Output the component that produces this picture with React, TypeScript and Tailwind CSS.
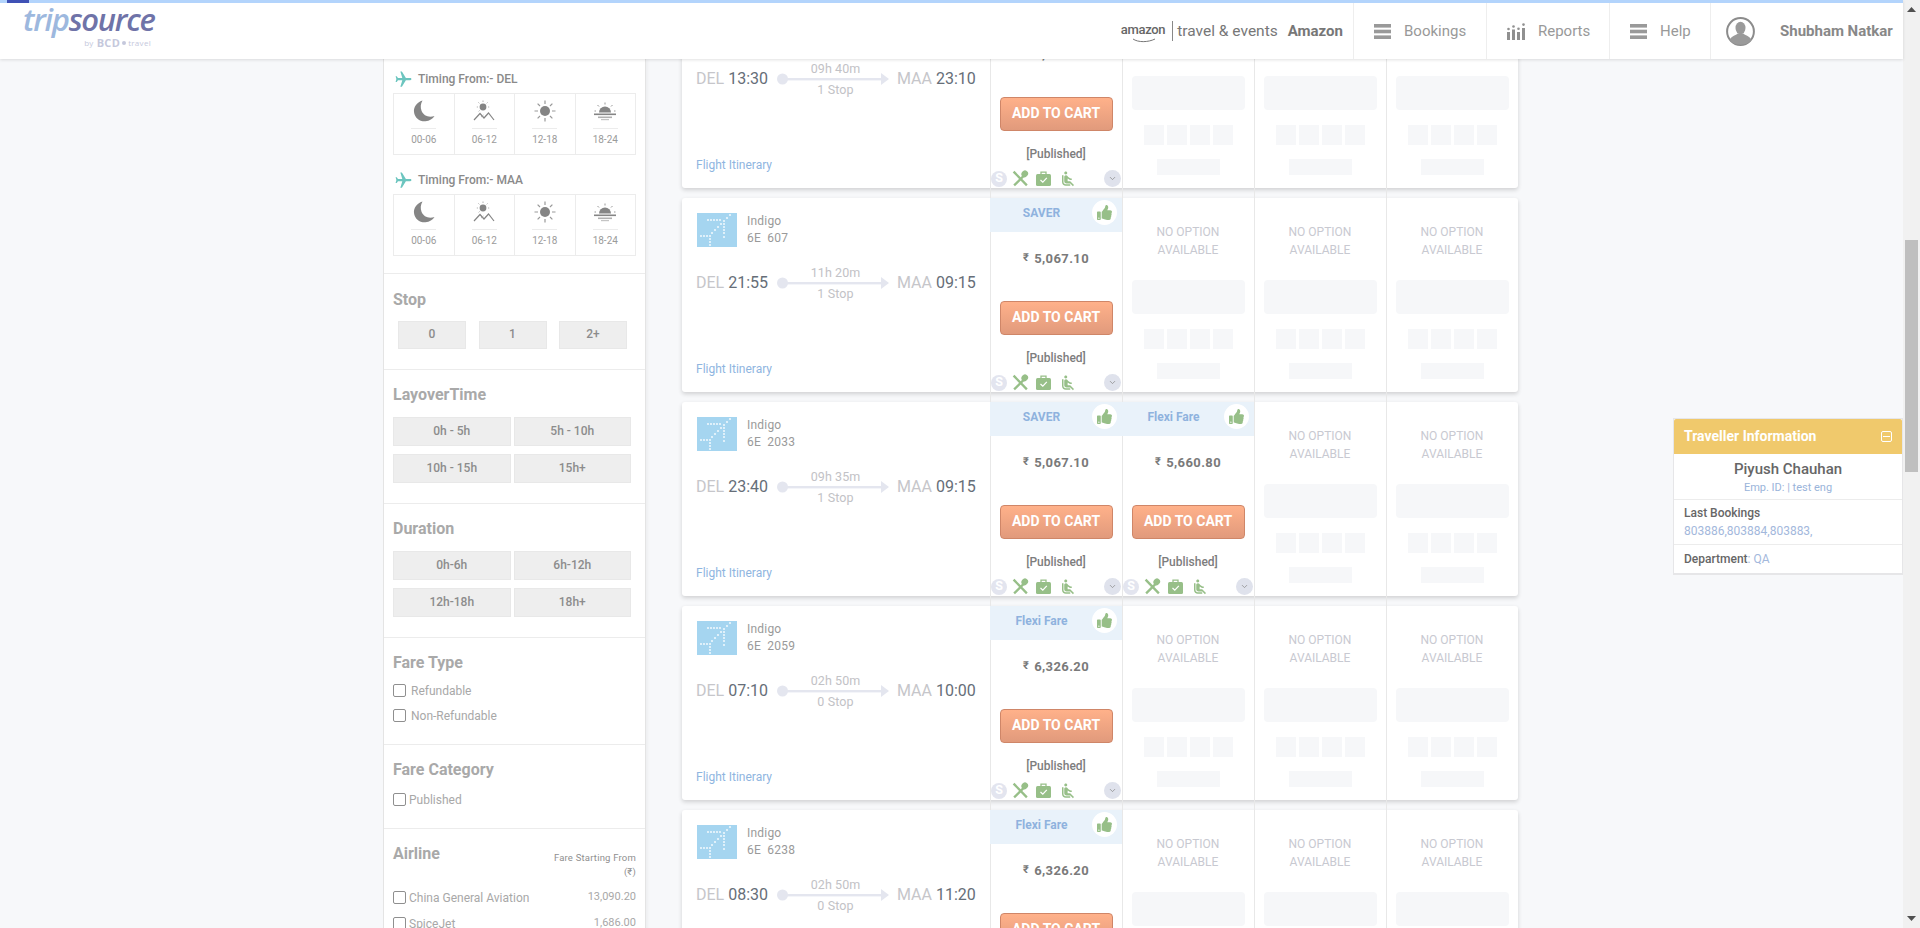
import { FaThumbsUp } from 'react-icons/fa';
import { MdAirlineSeatReclineNormal, MdFlight } from 'react-icons/md';
import { FiChevronDown } from 'react-icons/fi';

interface Fare {
  label: string;
  price: string;
}

interface Flight {
  code: string;
  dep: string;
  arr: string;
  duration: string;
  stops: string;
  fares: Fare[];
}

const flights: Flight[] = [
  { code: '', dep: '13:30', arr: '23:10', duration: '09h 40m', stops: '1 Stop', fares: [{ label: 'SAVER', price: '5,067.10' }] },
  { code: '607', dep: '21:55', arr: '09:15', duration: '11h 20m', stops: '1 Stop', fares: [{ label: 'SAVER', price: '5,067.10' }] },
  {
    code: '2033',
    dep: '23:40',
    arr: '09:15',
    duration: '09h 35m',
    stops: '1 Stop',
    fares: [
      { label: 'SAVER', price: '5,067.10' },
      { label: 'Flexi Fare', price: '5,660.80' },
    ],
  },
  { code: '2059', dep: '07:10', arr: '10:00', duration: '02h 50m', stops: '0 Stop', fares: [{ label: 'Flexi Fare', price: '6,326.20' }] },
  { code: '6238', dep: '08:30', arr: '11:20', duration: '02h 50m', stops: '0 Stop', fares: [{ label: 'Flexi Fare', price: '6,326.20' }] },
];

const IndigoLogo = () => {
  const dots = [
    [11, 7], [14, 7], [17, 7], [20, 7], [23, 7],
    [33, 2], [30, 5], [27, 8], [24, 11], [21, 14], [18, 17], [15, 20],
    [27, 11], [27, 14], [27, 17], [27, 20], [27, 24],
    [4, 23], [7, 23], [10, 23], [13, 23],
    [13, 26], [13, 29], [13, 32],
  ];
  return (
    <svg width="40" height="34" viewBox="0 0 40 34" className="shrink-0">
      <rect width="40" height="34" fill="#a5d5f0" />
      {dots.map(([x, y]) => (
        <circle key={`${x}-${y}`} cx={x} cy={y} r="1.1" fill="#ffffff" fillOpacity="0.8" />
      ))}
    </svg>
  );
};

const MenuIcon = () => (
  <svg width="17" height="15" viewBox="0 0 17 15" className="shrink-0">
    <rect y="0" width="17" height="3.6" fill="#999999" />
    <rect y="5.7" width="17" height="3.6" fill="#999999" />
    <rect y="11.4" width="17" height="3.6" fill="#999999" />
  </svg>
);

const ReportsIcon = () => (
  <svg width="19" height="17" viewBox="0 0 19 17" className="shrink-0">
    <g fill="#909090">
      <rect x="0" y="9" width="3" height="8" />
      <rect x="5" y="6.5" width="3" height="10.5" />
      <rect x="10" y="9" width="3" height="8" />
      <rect x="15" y="5" width="3" height="12" />
      <circle cx="1.5" cy="6" r="1.3" />
      <circle cx="6.5" cy="3.5" r="1.3" />
      <circle cx="11.5" cy="5.8" r="1.3" />
      <circle cx="16.5" cy="1.6" r="1.3" />
    </g>
  </svg>
);

const Avatar = () => (
  <svg width="29" height="29" viewBox="0 0 29 29" className="shrink-0">
    <circle cx="14.5" cy="14.5" r="13.4" fill="#ffffff" stroke="#8c8c8c" strokeWidth="2" />
    <ellipse cx="14.5" cy="11" rx="5" ry="6.2" fill="#9a9a9a" />
    <path d="M3.5 23 C6 18.5 10 18.5 11.5 16.5 L17.5 16.5 C19 18.5 23 18.5 25.5 23 C22.5 26.5 18.5 27.7 14.5 27.7 C10.5 27.7 6.5 26.5 3.5 23Z" fill="#9a9a9a" />
  </svg>
);

const Moon = () => (
  <svg width="22" height="22" viewBox="0 0 22 22">
    <path d="M9.5 0.5 C3.5 2.5 0.5 7 1 12 C1.6 18 7 21.8 12.5 21.3 C16.5 21 19.8 18.8 21.5 16 C15.5 18 10.5 15.5 8.6 11 C7.2 7.5 7.6 3.5 9.5 0.5Z" fill="#858585" />
  </svg>
);

const SunMountain = () => (
  <svg width="22" height="22" viewBox="0 0 22 22" fill="none">
    <circle cx="10" cy="7" r="3.4" fill="#858585" />
    <g stroke="#aaaaaa" strokeWidth="0.9">
      <path d="M10 0.5V2M3.8 7H5M15 7H16.2M5.4 2.4L6.4 3.4M14.6 2.4L13.6 3.4M5.6 11.4L6.6 10.4" />
    </g>
    <path d="M1 20L7 13.5L11 18L15.5 13L21 20" stroke="#858585" strokeWidth="1.2" />
    <path d="M8 17L10.5 15" stroke="#aaaaaa" strokeWidth="0.9" />
  </svg>
);

const Sun = () => (
  <svg width="22" height="22" viewBox="0 0 22 22" fill="none">
    <circle cx="11" cy="11" r="5" fill="#858585" />
    <path d="M11 0.5V4M11 18V21.5M0.5 11H4M18 11H21.5M3.6 3.6L6 6M16 16L18.4 18.4M18.4 3.6L16 6M6 16L3.6 18.4" stroke="#999999" strokeWidth="1.2" />
  </svg>
);

const Sunset = () => (
  <svg width="22" height="22" viewBox="0 0 22 22" fill="none">
    <path d="M5 12.5 A6 6 0 0 1 17 12.5Z" fill="#858585" />
    <rect x="0" y="13.5" width="22" height="1.6" fill="#858585" />
    <rect x="4" y="16.5" width="14" height="1.6" fill="#b0b0b0" />
    <rect x="7" y="19" width="8" height="1.2" fill="#c4c4c4" />
    <path d="M11 2.5V4.5M3.5 5L5 6.5M18.5 5L17 6.5M0.5 11H2M20 11H21.5" stroke="#999999" strokeWidth="1" />
  </svg>
);

const timeSlots = [
  { label: '00-06', icon: <Moon /> },
  { label: '06-12', icon: <SunMountain /> },
  { label: '12-18', icon: <Sun /> },
  { label: '18-24', icon: <Sunset /> },
];

const TimingBlock = ({ city, className }: { city: string; className?: string }) => (
  <div className={className}>
    <div className="flex h-[14px] items-center">
      <MdFlight className="ml-[1px] mr-[5px] h-[19px] w-[19px] rotate-90 text-[#6cc5bf]" />
      <span className="text-[12px] font-medium leading-[14px] text-[#8a8a8a]">Timing From:- {city}</span>
    </div>
    <div className="mt-[7px] flex h-[62px] border border-[#ececec]">
      {timeSlots.map((slot) => (
        <div key={slot.label} className="flex flex-1 flex-col items-center border-r border-[#ececec] pt-[6px] last:border-r-0">
          <div className="flex h-[22px] items-center justify-center">{slot.icon}</div>
          <div className="mt-[6px] h-px w-[25px] bg-[#ececec]" />
          <span className="mt-[5px] text-[10px] leading-[12px] text-[#9b9b9b]">{slot.label}</span>
        </div>
      ))}
    </div>
  </div>
);

const FilterTitle = ({ children }: { children: string }) => (
  <h3 className="h-[18px] pt-px text-[16px] font-bold leading-[18px] text-[#a9a9a9]">{children}</h3>
);

const FilterButtons = ({ items }: { items: string[] }) => (
  <div className="mt-[14px] grid w-[238px] grid-cols-2 gap-x-[3px] gap-y-[8px]">
    {items.map((item) => (
      <button key={item} className="h-[29px] border border-[#e8e8e8] bg-[#eeeeee] pb-[2px] text-[12px] font-medium text-[#8c8c8c]">
        {item}
      </button>
    ))}
  </div>
);

const Check = ({ label, className }: { label: string; className?: string }) => (
  <label className={`flex h-[16px] items-center ${className ?? ''}`}>
    <span className="h-[13px] w-[13px] shrink-0 rounded-[2px] border border-[#8f8f8f] bg-white" />
    <span className="pt-px text-[12px] text-[#a8a8a8]">{label}</span>
  </label>
);

const Sidebar = () => (
  <aside className="h-[900px] w-[263px] shrink-0 border-x border-[#e4e4e4] bg-white shadow-[2px_0_3px_rgba(0,0,0,0.04)]">
    <section className="border-b border-[#ececec] px-[9px] pb-[17px] pt-[13px]">
      <TimingBlock city="DEL" />
      <TimingBlock city="MAA" className="mt-[18px]" />
    </section>

    <section className="border-b border-[#ececec] px-[9px] pb-[20px] pt-[16px]">
      <FilterTitle>Stop</FilterTitle>
      <div className="ml-[5px] mt-[13px] flex w-[229px] justify-between">
        {['0', '1', '2+'].map((s) => (
          <button key={s} className="h-[28px] w-[68px] border border-[#e8e8e8] bg-[#eeeeee] pb-[2px] text-[12px] font-medium text-[#8c8c8c]">
            {s}
          </button>
        ))}
      </div>
    </section>

    <section className="border-b border-[#ececec] px-[9px] pb-[20px] pt-[15px]">
      <FilterTitle>LayoverTime</FilterTitle>
      <FilterButtons items={['0h - 5h', '5h - 10h', '10h - 15h', '15h+']} />
    </section>

    <section className="border-b border-[#ececec] px-[9px] pb-[20px] pt-[15px]">
      <FilterTitle>Duration</FilterTitle>
      <FilterButtons items={['0h-6h', '6h-12h', '12h-18h', '18h+']} />
    </section>

    <section className="border-b border-[#ececec] px-[9px] pb-[21px] pt-[15px]">
      <FilterTitle>Fare Type</FilterTitle>
      <Check label="Refundable" className="mt-[11px] [&>span:last-child]:ml-[5px]" />
      <Check label="Non-Refundable" className="mt-[9px] [&>span:last-child]:ml-[5px]" />
    </section>

    <section className="border-b border-[#ececec] px-[9px] pb-[21px] pt-[15px]">
      <FilterTitle>Fare Category</FilterTitle>
      <Check label="Published" className="mt-[13px] [&>span:last-child]:ml-[3px]" />
    </section>

    <section className="px-[9px] pt-[15px]">
      <div className="flex items-start justify-between">
        <FilterTitle>Airline</FilterTitle>
        <p className="mt-[7px] w-[90px] text-right text-[9.5px] leading-[14px] tracking-[0.2px] text-[#8f8f8f]">Fare Starting From (₹)</p>
      </div>
      <div className="mt-[10px] flex h-[16px] items-center justify-between">
        <Check label="China General Aviation" className="[&>span:last-child]:ml-[3px]" />
        <span className="pt-px text-[11px] text-[#a8a8a8]">13,090.20</span>
      </div>
      <div className="mt-[10px] flex h-[16px] items-center justify-between">
        <Check label="SpiceJet" className="[&>span:last-child]:ml-[3px]" />
        <span className="pt-px text-[11px] text-[#a8a8a8]">1,686.00</span>
      </div>
    </section>
  </aside>
);

const FareIcons = () => (
  <div className="mt-[8px] flex h-[17px] w-full items-center pl-px pr-px">
    <span className="flex h-[16px] w-[16px] shrink-0 items-center justify-center rounded-full bg-[#e3e5ef] text-[12.5px] font-bold leading-none text-white">S</span>
    <svg width="17" height="17" viewBox="0 0 16 16" fill="none" className="ml-[5px] shrink-0">
      <path d="M1.5 1.5L14 14.5" stroke="#97bf88" strokeWidth="2.2" />
      <path d="M11 5.5L2 14.5" stroke="#97bf88" strokeWidth="2.2" />
      <ellipse cx="12" cy="3.6" rx="3" ry="3.3" transform="rotate(40 12 3.6)" fill="#97bf88" />
    </svg>
    <svg width="15" height="15" viewBox="0 0 15 15" fill="none" className="ml-[7px] shrink-0">
      <path d="M5 3V1.2H10V3" stroke="#97bf88" strokeWidth="1.3" />
      <rect x="0" y="3" width="15" height="12" rx="1.5" fill="#97bf88" />
      <path d="M4.5 9L6.8 11.2L10.8 6.8" stroke="#ffffff" strokeWidth="1.2" />
    </svg>
    <MdAirlineSeatReclineNormal className="ml-[8px] h-[18px] w-[18px] shrink-0 text-[#97bf88]" />
    <span className="ml-auto flex h-[17px] w-[17px] shrink-0 items-center justify-center rounded-full bg-[#dfe2ec] text-[#8a8a8a]">
      <FiChevronDown className="h-[9px] w-[9px]" />
    </span>
  </div>
);

const cellLine = "relative w-[132px] shrink-0 before:absolute before:bottom-0 before:left-0 before:top-[-10px] before:w-px before:bg-[#e8e8e8] before:content-['']";

const FareCell = ({ fare }: { fare: Fare }) => (
  <div className={`${cellLine} flex flex-col items-center`}>
    <div className="relative flex h-[34px] w-full shrink-0 items-center justify-center bg-[#e9f2fa] pb-[5px] pr-[29px]">
      <span className="text-[12px] font-bold text-[#8fb2de]">{fare.label}</span>
      <span className="absolute right-[5px] top-[2px] flex h-[25px] w-[25px] items-center justify-center rounded-full bg-white">
        <FaThumbsUp className="h-[15px] w-[15px] text-[#97bf88]" />
      </span>
    </div>
    <p className="mt-[18px] text-[13px] font-bold leading-[16px] tracking-[0.4px] text-[#7a7a7a]">
      <span className="mr-[5px] align-[2px] text-[11px]">₹</span>
      {fare.price}
    </p>
    <button className="mt-[34px] h-[34px] w-[113px] shrink-0 rounded-[4px] border border-[#cf8668] bg-gradient-to-b from-[#ffb18a] to-[#e19a7c] pb-[2px] text-[14px] font-bold text-white">
      ADD TO CART
    </button>
    <p className="mt-[15px] text-[12px] font-medium leading-[16px] text-[#7d7d7d]">[Published]</p>
    <FareIcons />
  </div>
);

const EmptyCell = () => (
  <div className={`${cellLine} flex flex-col items-center pt-[25px]`}>
    <p className="w-[90px] text-center text-[12px] leading-[18px] text-[#c8c9d1]">NO OPTION AVAILABLE</p>
    <div className="mt-[21px] h-[34px] w-[113px] rounded-[4px] bg-[#f6f7f9]" />
    <div className="mt-[15px] flex gap-[3px]">
      {[0, 1, 2, 3].map((i) => (
        <div key={i} className="h-[20px] w-[20px] bg-[#f6f7f9]" />
      ))}
    </div>
    <div className="mt-[14px] h-[16px] w-[63px] bg-[#f6f7f9]" />
  </div>
);

const FlightCard = ({ flight }: { flight: Flight }) => (
  <div className="flex h-[194px] w-[836px] shrink-0 rounded-[3px] bg-white shadow-[0_2px_4px_rgba(0,0,0,0.16)]">
    <div className="flex w-[308px] shrink-0 flex-col pl-[15px] pt-[15px]">
      <div className="flex gap-[10px]">
        <IndigoLogo />
        <div className="text-[12px] leading-[17px] tracking-[0.2px] text-[#9a9a9a]">
          <div>Indigo</div>
          <div className="whitespace-pre">6E  {flight.code}</div>
        </div>
      </div>
      <div className="ml-[-1px] mt-[16px] flex h-[40px] items-center text-[16px]">
        <div className="w-[81px] shrink-0">
          <span className="text-[#c6c6ca]">DEL</span> <span className="text-[#666e78]">{flight.dep}</span>
        </div>
        <div className="relative flex h-[40px] w-[120px] shrink-0 flex-col items-center justify-between pt-[1px] text-[12.5px] leading-[18px] tracking-[0.1px] text-[#c2c2c6]">
          <svg width="112" height="12" viewBox="0 0 112 12" className="absolute left-0 top-[14px]">
            <circle cx="5.5" cy="6" r="5.5" fill="#e4e6ef" />
            <rect x="8" y="5" width="98" height="2.4" fill="#e4e6ef" />
            <path d="M104 0L112 6L104 12Z" fill="#e4e6ef" />
          </svg>
          <span className="pr-[3px]">{flight.duration}</span>
          <span className="pr-[3px]">{flight.stops}</span>
        </div>
        <div className="shrink-0">
          <span className="text-[#c6c6ca]">MAA</span> <span className="text-[#666e78]">{flight.arr}</span>
        </div>
      </div>
      <a className="mb-[15px] ml-[-1px] mt-auto text-[12px] leading-[16px] text-[#8fb5df]">Flight Itinerary</a>
    </div>
    {flight.fares.map((fare) => (
      <FareCell key={fare.label} fare={fare} />
    ))}
    {Array.from({ length: 4 - flight.fares.length }, (_, i) => (
      <EmptyCell key={i} />
    ))}
  </div>
);

const TravellerPanel = () => (
  <aside className="ml-auto mt-[359px] h-[157px] w-[230px] shrink-0 border border-b-2 border-[#e6e6e8] bg-white">
    <div className="flex h-[35px] items-center justify-between rounded-t-[2px] bg-[#f0c96c] pl-[10px] pr-[10px]">
      <span className="text-[14px] font-bold text-white">Traveller Information</span>
      <span className="flex h-[11px] w-[11px] items-center justify-center rounded-[2px] border border-white">
        <span className="h-px w-[7px] bg-white" />
      </span>
    </div>
    <div className="flex h-[46px] flex-col items-center border-b border-[#ececec] pt-[5px]">
      <p className="text-[15px] font-medium leading-[20px] text-[#666666]">Piyush Chauhan</p>
      <p className="pt-px text-[11px] leading-[15px] text-[#9ab4da]">Emp. ID: | test eng</p>
    </div>
    <div className="h-[45px] border-b border-[#ececec] px-[10px] pt-[4px] text-[12px] leading-[18px]">
      <p className="font-medium text-[#666666]">Last Bookings</p>
      <p className="text-[#a3b8dc]">803886,803884,803883,</p>
    </div>
    <p className="px-[10px] pt-[5px] text-[12px] leading-[18px] text-[#a3b8dc]">
      <span className="font-medium text-[#666666]">Department</span>: QA
    </p>
  </aside>
);

const NavItem = ({ icon, label, className }: { icon: React.ReactNode; label: string; className: string }) => (
  <div className={`flex items-center border-l border-[#eeeeee] pl-[20px] ${className}`}>
    {icon}
    <span className="text-[15px] text-[#999999]">{label}</span>
  </div>
);

const Header = () => (
  <header className="relative z-10 shrink-0 bg-white shadow-[0_1px_3px_rgba(0,0,0,0.12)]">
    <div className="flex h-[3px] bg-[#b3d4fc]">
      <div className="ml-[7px] w-[22px] bg-[#3f51b5]" />
    </div>
    <div className="flex h-[56px] items-stretch">
      <div className="ml-[23px] flex w-[131px] flex-col font-['Open_Sans',sans-serif]">
        <div className="mt-[-2px] text-[31px] font-semibold italic leading-[36px] tracking-[-1.3px]">
          <span className="text-[#9db8de]">trip</span>
          <span className="text-[#6f73a8]">source</span>
        </div>
        <div className="mt-[1px] flex items-center justify-end pr-[3px] text-[8px] leading-[10px] tracking-[0.3px] text-[#c5c8dc]">
          <span>by</span>
          <span className="ml-[3px] text-[11px] font-bold">BCD</span>
          <span className="mx-[2px] h-[4px] w-[4px] rounded-full bg-[#c5c8dc]" />
          <span>travel</span>
        </div>
      </div>

      <div className="ml-auto flex items-center pr-[10px]">
        <div className="relative mr-[7px] pb-[3px] text-[13px] font-medium leading-[14px] tracking-[-0.3px] text-[#666666]">
          amazon
          <svg width="24" height="5" viewBox="0 0 24 5" fill="none" className="absolute bottom-[-3px] left-[11px]">
            <path d="M1 1C6 4.5 16 4.5 23 1" stroke="#777777" strokeWidth="1" />
          </svg>
        </div>
        <span className="h-[20px] w-px bg-[#888888]" />
        <span className="ml-[4px] text-[15.5px] leading-[18px] text-[#777777]">travel &amp; events</span>
        <span className="ml-[10px] text-[15px] font-bold text-[#777777]">Amazon</span>
      </div>

      <NavItem icon={<MenuIcon />} label="Bookings" className="w-[133px] gap-[13px]" />
      <NavItem icon={<ReportsIcon />} label="Reports" className="w-[123px] gap-[12px]" />
      <NavItem icon={<MenuIcon />} label="Help" className="w-[101px] gap-[13px]" />
      <div className="flex w-[193px] items-center gap-[25px] border-l border-[#eeeeee] pl-[15px]">
        <Avatar />
        <span className="text-[15px] font-bold text-[#888888]">Shubham Natkar</span>
      </div>
    </div>
  </header>
);

const Scrollbar = () => (
  <div className="flex h-[928px] w-[17px] shrink-0 flex-col items-center bg-[#f1f1f1]">
    <svg width="9" height="5" viewBox="0 0 9 5" className="mt-[7px]">
      <path d="M0 5L4.5 0L9 5Z" fill="#505050" />
    </svg>
    <div className="mt-[228px] h-[232px] w-[13px] bg-[#bfbfbf]" />
    <svg width="9" height="5" viewBox="0 0 9 5" className="mb-[7px] mt-auto">
      <path d="M0 0L9 0L4.5 5Z" fill="#505050" />
    </svg>
  </div>
);

export default function App() {
  return (
    <div className="flex h-[928px] w-[1920px] overflow-hidden bg-[#f7f8fa] font-['Roboto',sans-serif]">
      <div className="flex w-[1903px] flex-col">
        <Header />
        <main className="flex h-[869px] overflow-hidden pl-[383px]">
          <Sidebar />
          <div className="ml-[36px] mt-[-65px] flex flex-col gap-[10px]">
            {flights.map((flight) => (
              <FlightCard key={flight.dep} flight={flight} />
            ))}
          </div>
          <TravellerPanel />
        </main>
      </div>
      <Scrollbar />
    </div>
  );
}
